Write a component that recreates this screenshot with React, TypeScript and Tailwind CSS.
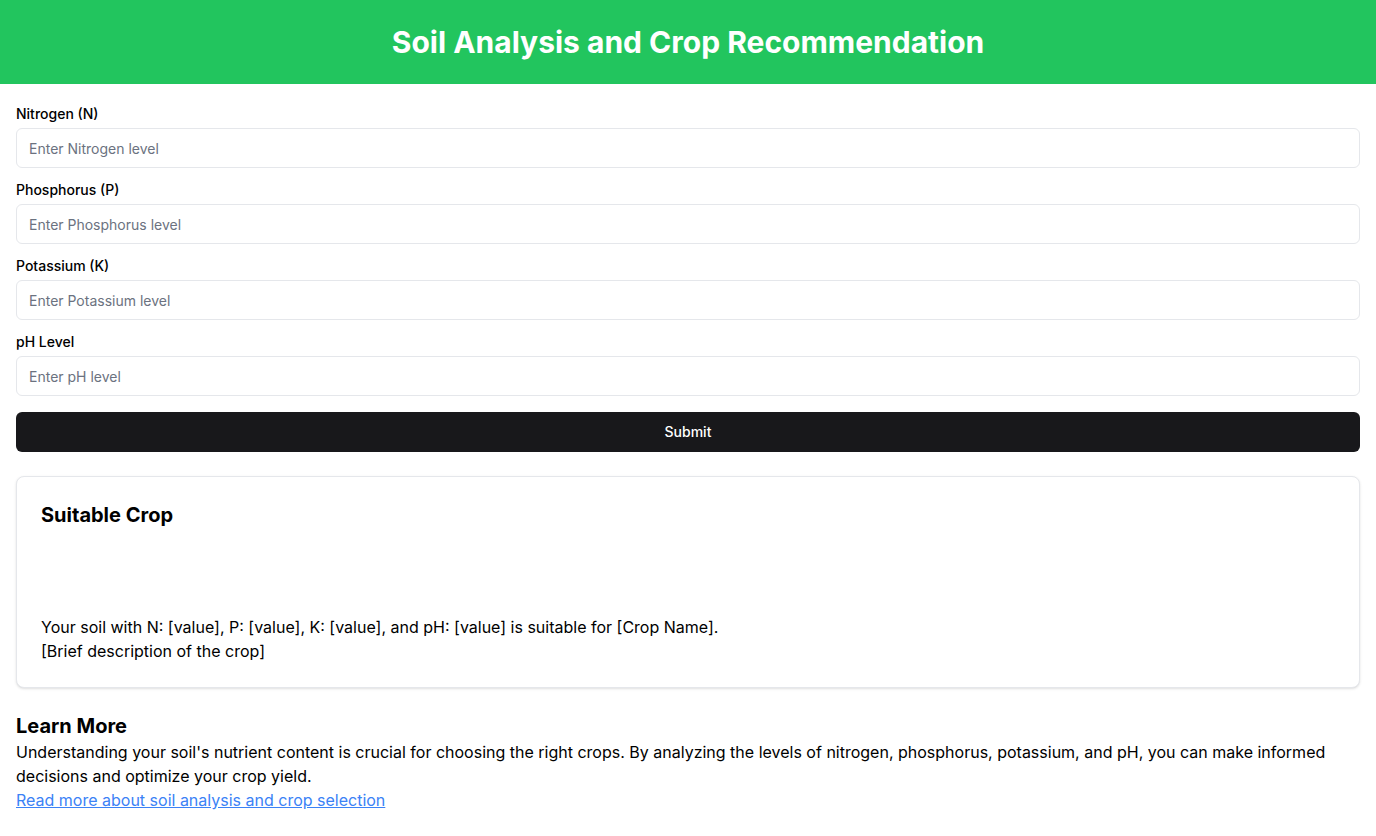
function Field({ label, placeholder }: { label: string; placeholder: string }) {
  return (
    <div className="flex flex-col gap-1">
      <label className="text-sm font-medium leading-5 text-black">{label}</label>
      <input
        type="text"
        placeholder={placeholder}
        className="h-10 w-full rounded-md border border-[#e5e7eb] bg-white px-3 text-sm text-black placeholder:text-[#6b7280] outline-none"
      />
    </div>
  )
}

export default function App() {
  return (
    <div className="min-h-screen bg-white font-['Inter',sans-serif] text-black">
      <header className="flex h-[84px] items-center justify-center bg-[#22c55e]">
        <h1 className="text-3xl font-bold text-white">Soil Analysis and Crop Recommendation</h1>
      </header>

      <main className="flex flex-col px-4 pt-5">
        <div className="flex flex-col gap-3">
          <Field label="Nitrogen (N)" placeholder="Enter Nitrogen level" />
          <Field label="Phosphorus (P)" placeholder="Enter Phosphorus level" />
          <Field label="Potassium (K)" placeholder="Enter Potassium level" />
          <Field label="pH Level" placeholder="Enter pH level" />
        </div>

        <button className="mt-4 h-10 w-full rounded-md bg-[#18181b] text-sm font-medium text-white">
          Submit
        </button>

        <div className="mt-6 rounded-lg border border-[#e5e7eb] bg-white p-6 shadow-sm">
          <h3 className="text-xl font-bold leading-7">Suitable Crop</h3>
          <p className="mt-[86px] text-base leading-6">
            Your soil with N: [value], P: [value], K: [value], and pH: [value] is suitable for [Crop Name].
            <br />
            [Brief description of the crop]
          </p>
        </div>

        <section className="mt-6">
          <h2 className="text-xl font-bold leading-7">Learn More</h2>
          <p className="text-base leading-6">
            Understanding your soil's nutrient content is crucial for choosing the right crops. By analyzing the levels of
            nitrogen, phosphorus, potassium, and pH, you can make informed decisions and optimize your crop yield.
          </p>
          <a href="#" className="text-base leading-6 text-[#3b82f6] underline">
            Read more about soil analysis and crop selection
          </a>
        </section>
      </main>
    </div>
  )
}
